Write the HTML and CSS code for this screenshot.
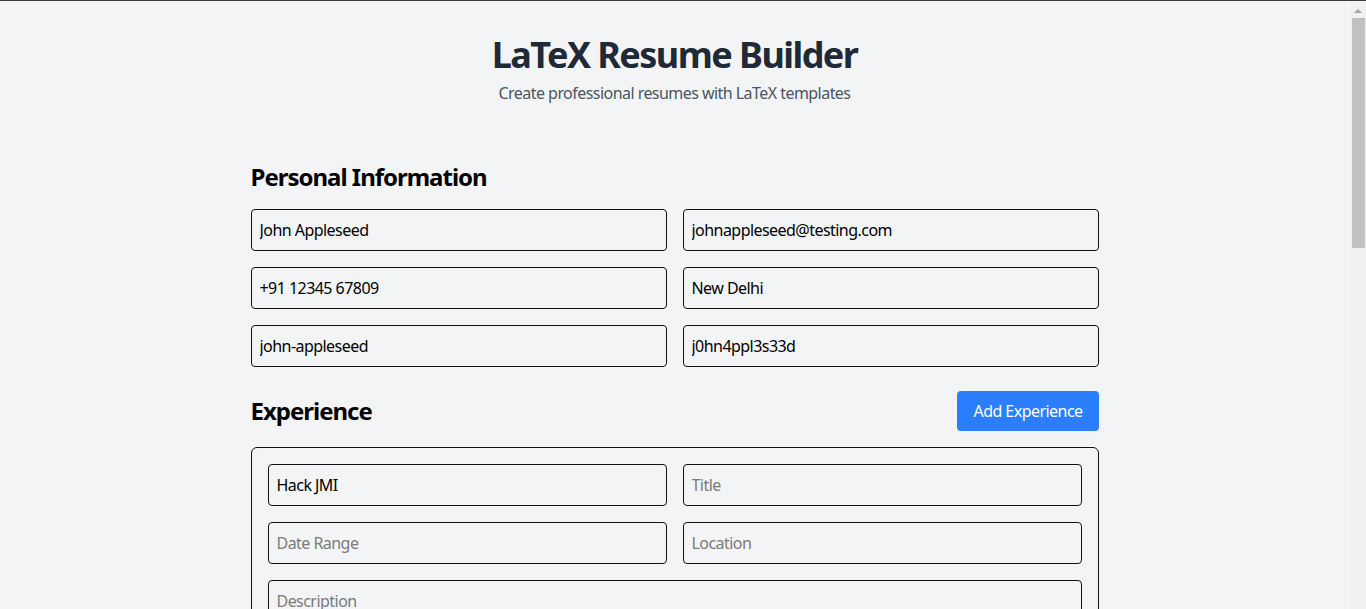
FILE: index.html
```html
<!DOCTYPE html>
<html lang="en">
<head>
<meta charset="utf-8">
<title>LaTeX Resume Builder</title>
<link rel="stylesheet" href="styles.css">
</head>
<body>
<div class="window">
  <main class="main">
    <div class="container">
      <header class="header">
        <h1 class="title">LaTeX Resume Builder</h1>
        <p class="subtitle">Create professional resumes with LaTeX templates</p>
      </header>

      <section class="section section-personal">
        <h2 class="section-title">Personal Information</h2>
        <div class="grid">
          <input class="field" type="text" value="John Appleseed">
          <input class="field" type="text" value="johnappleseed@testing.com">
          <input class="field" type="text" value="+91 12345 67809">
          <input class="field" type="text" value="New Delhi">
          <input class="field" type="text" value="john-appleseed">
          <input class="field" type="text" value="j0hn4ppl3s33d">
        </div>
      </section>

      <section class="section section-experience">
        <div class="section-head">
          <h2 class="section-title">Experience</h2>
          <button class="btn" type="button">Add Experience</button>
        </div>
        <div class="card">
          <div class="grid">
            <input class="field" type="text" value="Hack JMI">
            <input class="field" type="text" placeholder="Title">
            <input class="field" type="text" placeholder="Date Range">
            <input class="field" type="text" placeholder="Location">
            <textarea class="field field-wide" placeholder="Description" rows="4"></textarea>
          </div>
        </div>
      </section>
    </div>
  </main>
  <div class="scrollbar" aria-hidden="true">
    <div class="scroll-arrow"></div>
    <div class="scroll-thumb"></div>
  </div>
</div>
</body>
</html>
```
FILE: styles.css
```css
* { box-sizing: border-box; }

html, body {
  margin: 0;
  padding: 0;
  height: 100%;
  overflow: hidden;
}

body {
  background: #f3f4f6;
  font-family: "Noto Sans", "Open Sans", sans-serif;
  letter-spacing: -0.034em;
  color: #000;
}

.window {
  display: flex;
  height: 609px;
  border-top: 1px solid #3c3c3c;
}

.main {
  flex: 1;
  overflow: hidden;
}

.container {
  width: 848px;
  margin: 0 auto;
}

.header {
  text-align: center;
  padding-top: 34px;
}

.title {
  margin: 0;
  font-size: 36px;
  line-height: 40px;
  font-weight: 700;
  letter-spacing: -0.043em;
  color: #1f2937;
}

.subtitle {
  margin: 6px 0 0;
  font-size: 16px;
  line-height: 24px;
  color: #4b5563;
}

.section-personal {
  margin-top: 56px;
}

.section-title {
  margin: 0;
  font-size: 24px;
  line-height: 32px;
  font-weight: 700;
  letter-spacing: -0.042em;
  color: #000;
}

.section-personal .section-title {
  margin-bottom: 16px;
}

.grid {
  display: grid;
  grid-template-columns: 1fr 1fr;
  gap: 16px;
}

.field {
  display: block;
  width: 100%;
  height: 42px;
  padding: 0 8px;
  border: 1px solid #111;
  border-radius: 4px;
  background: transparent;
  font: inherit;
  font-size: 16px;
  letter-spacing: inherit;
  color: #000;
  outline: none;
}

.field::placeholder {
  color: #7b7b7b;
}

.field-wide {
  grid-column: 1 / -1;
  height: 96px;
  padding: 9px 8px;
  resize: none;
}

.section-experience {
  margin-top: 24px;
}

.section-head {
  display: flex;
  justify-content: space-between;
  align-items: center;
  margin-bottom: 16px;
}

.btn {
  height: 40px;
  padding: 0 16px;
  border: 0;
  border-radius: 4px;
  background: #2b7fff;
  color: #fff;
  font: inherit;
  font-size: 16px;
  letter-spacing: inherit;
}

.card {
  border: 1px solid #111;
  border-radius: 6px;
  padding: 16px;
}

.scrollbar {
  width: 17px;
  flex: none;
  background: #f1f1f1;
  border-left: 1px solid #f7f7f7;
  display: flex;
  flex-direction: column;
  align-items: center;
}

.scroll-arrow {
  margin-top: 8px;
  width: 0;
  height: 0;
  border-left: 4px solid transparent;
  border-right: 4px solid transparent;
  border-bottom: 4px solid #a3a3a3;
}

.scroll-thumb {
  margin-top: 5px;
  width: 13px;
  height: 230px;
  background: #c1c1c1;
}
```
